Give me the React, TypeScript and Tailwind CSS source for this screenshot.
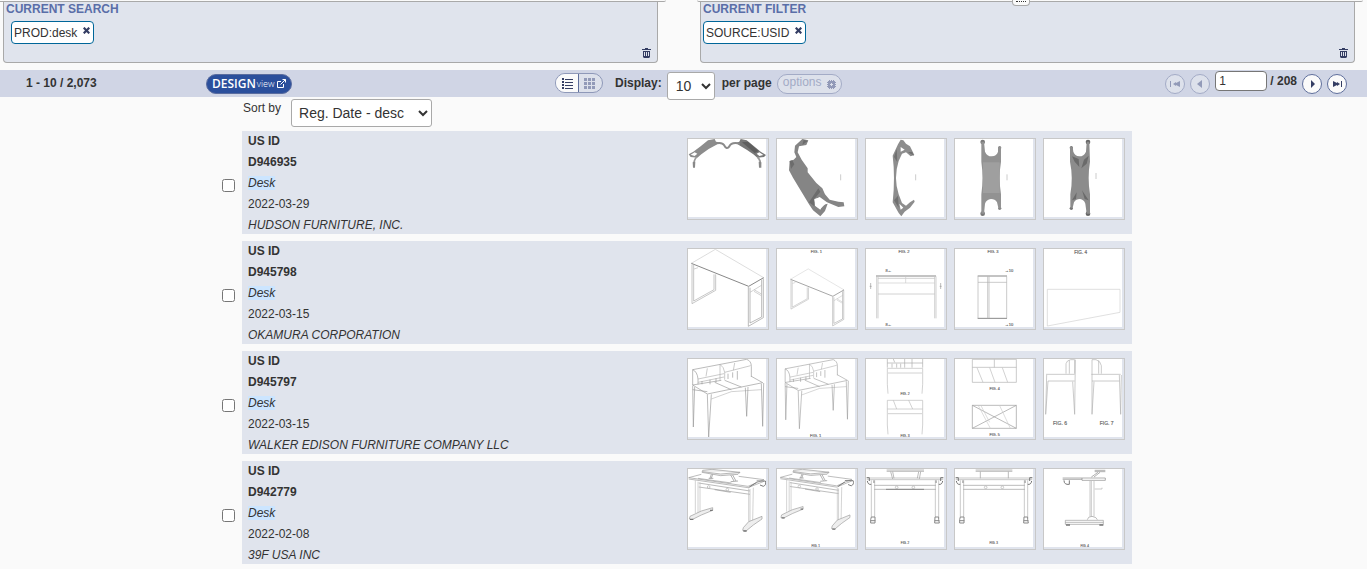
import { useState } from 'react';
import type { ReactNode } from 'react';

type Design = {
  id: string;
  date: string;
  owner: string;
  figures: ReactNode[];
};

function Caption({ x, y, size = 12, children }: { x: number; y: number; size?: number; children: string }) {
  return (
    <text x={x} y={y} fontSize={size} fill="#555" stroke="#777" strokeWidth=".5" textAnchor="middle" fontFamily="Liberation Sans, sans-serif">
      {children}
    </text>
  );
}

// D946935 - bull hide table
const hudson = [
  <g key="a" stroke="none">
    <path d="M2 46 L16 38 L38 22 L60 4 L80 0 L84 8 L94 10 L84 18 L62 30 L40 46 L28 56 L8 54 Z M8 47 L20 51 L28 44 L20 40 Z" fill="#8c8c8c" fillRule="evenodd" />
    <path d="M234 48 L218 38 L198 22 L176 4 L158 0 L154 8 L144 12 L156 20 L176 32 L196 46 L208 56 L228 54 Z M226 48 L214 51 L206 44 L214 40 Z" fill="#777" fillRule="evenodd" />
    <path d="M162 10 L180 8 L212 36 L200 42 Z" fill="#5e5e5e" />
    <path d="M80 14 Q102 8 108 18 Q116 34 124 22 Q130 8 156 14" fill="none" stroke="#8a8a8a" strokeWidth="6" />
    <path d="M26 54 Q16 64 18 82 M208 54 Q220 64 216 82" fill="none" stroke="#999" strokeWidth="5" />
    <path d="M14 70 L22 68 L21 86 L15 86 Z M212 68 L220 70 L220 86 L213 86 Z" fill="#888" />
  </g>,
  <g key="b" stroke="none">
    <path d="M94 4 L76 0 L54 20 L52 40 L58 54 L50 62 L38 66 L36 94 L48 116 L96 196 L108 214 L130 232 L144 216 L152 194 L136 198 L130 212 L114 200 L112 182 L128 174 L150 190 L184 204 L202 202 L200 190 L184 188 L158 182 L144 166 L136 148 L118 132 L92 100 L92 88 L74 62 L62 40 L66 22 L88 18 Z" fill="#858585" />
    <path d="M96 190 L124 148 L130 158 L112 180 L112 202 Z M38 66 L46 64 L52 76 L42 90 Z M80 2 L92 6 L76 18 Z" fill="#6c6c6c" />
    <path d="M112 180 L126 176 L148 192 L130 210 L116 200 Z" fill="#fff" />
    <path d="M191 106 v18" stroke="#ccc" strokeWidth="3" />
  </g>,
  <g key="c" stroke="none">
    <path d="M104 2 L112 4 L120 14 L132 22 L145 48 L134 52 L120 40 L108 44 L98 66 Q82 116 98 166 L108 192 L120 200 L132 190 L144 182 L146 188 L132 206 L116 218 L106 232 L98 222 L80 190 Q88 116 80 50 L96 16 Z M104 24 L104 38 L116 32 Z M100 194 L104 212 L112 206 Z" fill="#8d8d8d" fillRule="evenodd" />
    <path d="M84 54 L92 30 L94 70 Z M84 184 L96 170 L98 206 Z M126 40 L138 38 L144 50 Z" fill="#707070" />
    <path d="M149 106 v18" stroke="#ccc" strokeWidth="3" />
  </g>,
  <g key="d" stroke="none">
    <circle cx="83" cy="9" r="7" fill="#777" />
    <circle cx="83" cy="224" r="7" fill="#777" />
    <circle cx="134" cy="26" r="5" fill="#888" />
    <circle cx="134" cy="208" r="5" fill="#888" />
    <path d="M79 8 h8 L90 38 Q96 52 110 52 Q126 50 129 38 V24 h9 V68 Q130 116 138 166 V206 h-8 L126 190 Q120 180 108 180 Q94 182 90 194 L87 224 H79 V166 Q86 116 79 68 Z" fill="#929292" />
    <path d="M84 70 h50 v92 h-50 z" fill="#9f9f9f" />
    <path d="M156 106 v18" stroke="#ccc" strokeWidth="3" />
  </g>,
  <g key="e" stroke="none">
    <circle cx="132" cy="9" r="7" fill="#666" />
    <circle cx="132" cy="224" r="7" fill="#666" />
    <circle cx="82" cy="26" r="5" fill="#777" />
    <circle cx="82" cy="208" r="5" fill="#777" />
    <path d="M136 8 h-8 L126 38 Q120 52 106 52 Q92 50 88 38 L86 24 H78 V68 Q88 116 79 166 V206 h7 L90 190 Q96 180 108 180 Q120 182 124 194 L128 224 H138 V166 Q130 116 138 68 Z" fill="#8c8c8c" />
    <path d="M84 52 L104 60 L106 84 L92 68 Z M134 50 L128 74 L112 88 L120 62 Z M84 184 L98 160 L96 180 Z M134 184 L114 154 L122 180 Z" fill="#6a6a6a" />
    <path d="M156 102 v18" stroke="#ccc" strokeWidth="3" />
  </g>,
];

function OkamuraPerspective() {
  return (
    <>
      <path d="M10 43 L82 1 L227 86" stroke="#ccc" />
      <path d="M10 43 L182 112 L227 86" stroke="#888" strokeWidth="3" />
      <path d="M12 46 V164 L83 124 V76 M17 48 V156 L78 122 V76" stroke="#aaa" />
      <path d="M181 114 V232 L226 206 V88 M186 116 V222 L221 204 V92" stroke="#999" />
      <path d="M18 60 L30 56 M186 130 L222 108 M198 122 L222 136 M198 127 L220 140" stroke="#bbb" />
    </>
  );
}

const okamura = [
  <OkamuraPerspective key="a" />,
  <g key="b">
    <Caption x={118} y={11}>FIG. 1</Caption>
    <g transform="translate(33 59) scale(.74)">
      <OkamuraPerspective />
    </g>
  </g>,
  <g key="c">
    <Caption x={114} y={11}>FIG. 2</Caption>
    <path d="M30 81 H210" stroke="#888" strokeWidth="3" />
    <path d="M32 82 V208 M36 84 V208 M206 84 V208 M210 82 V208 M36 88 H206 M36 135 H206" stroke="#bbb" />
    <path d="M119 84 V102 M36 102 H206" stroke="#ccc" />
    <path d="M14 102 v18 M11 112 h6 M224 102 v18 M221 112 h6" stroke="#999" />
    <Caption x={68} y={69}>8←</Caption>
    <Caption x={68} y={231}>8←</Caption>
  </g>,
  <g key="d">
    <Caption x={114} y={11}>FIG. 3</Caption>
    <path d="M68 81 H156 M68 208 H156" stroke="#888" strokeWidth="3" />
    <path d="M69 82 V208 M155 82 V208 M98 82 V208 M102 82 V208 M69 100 H155" />
    <Caption x={162} y={69}>→10</Caption>
    <Caption x={162} y={231}>→10</Caption>
  </g>,
  <g key="e">
    <Caption x={110} y={14} size={14}>FIG. 4</Caption>
    <path d="M10 121 H228 V190 L10 231 Z" stroke="#d0d0d0" />
  </g>,
];

function WalkerPerspective() {
  return (
    <>
      <path d="M14 32 L176 1 Q190 6 190 22 V54 M14 32 Q28 38 30 60 V76 M14 32 V78" stroke="#999" />
      <path d="M96 16 V64 M96 16 Q108 24 110 40 V62 M30 60 L108 44 M110 40 L188 20 M30 70 L108 54 M58 28 L54 52 M140 12 L136 34" />
      <path d="M42 66 V76 M66 62 V76 M84 58 V70 M120 44 V60 M134 40 V56 M148 36 V62" stroke="#999" />
      <path d="M14 78 L58 105 L224 71 L190 52 M14 78 L100 64 M80 70 L130 92 M110 64 L160 84 M14 92 L58 98" stroke="#999" />
      <path d="M70 120 L130 98 L220 92" stroke="#bbb" />
      <path d="M14 80 L16 204 L20 84 M58 106 L62 234 L70 106 M172 86 L176 172 L180 84 M220 74 L224 202 L227 72" stroke="#999" />
    </>
  );
}

function WalkerFront() {
  return <path d="M64 28 H170 M66 42 H168 M64 28 V76 L66 104 M170 28 V76 L168 104" />;
}

const walker = [
  <WalkerPerspective key="a" />,
  <g key="b">
    <g transform="translate(12 1) scale(.89)">
      <WalkerPerspective />
    </g>
    <Caption x={116} y={233}>FIG. 1</Caption>
  </g>,
  <g key="c" stroke="#bbb">
    <path d="M64 0 V26 M170 0 V26 M64 12 H170 M116 0 V26 M82 0 L86 10 M138 0 V26 M78 14 V26 M92 14 V26 M104 14 V26" stroke="#aaa" />
    <WalkerFront />
    <Caption x={117} y={107} size={10}>FIG. 2</Caption>
    <path d="M64 124 H170 V150 M64 124 V150 M82 124 L92 150 M128 124 L140 150" />
    <g transform="translate(0 122)">
      <WalkerFront />
    </g>
    <Caption x={117} y={233} size={10}>FIG. 3</Caption>
  </g>,
  <g key="d">
    <path d="M52 1 H184 V70 H52 Z M52 25 H184 M118 1 V25" />
    <path d="M66 26 L84 70 M104 26 L120 70 M142 26 L158 70" stroke="#bbb" />
    <Caption x={119} y={93} size={11}>FIG. 4</Caption>
    <path d="M52 139 H184 V208 H52 Z M52 139 L184 208 M184 139 L52 208" stroke="#999" />
    <path d="M70 140 L106 208 M78 140 L104 190 M134 140 L166 208" stroke="#ccc" />
    <Caption x={119} y={232} size={11}>FIG. 5</Caption>
  </g>,
  <g key="e">
    <path d="M6 46 H92 M12 66 H92 M66 44 V14 Q68 4 80 2 H92 V44 M76 4 V44 M8 48 L5 166 L12 66 M86 68 L92 166 L94 2" />
    <path d="M142 46 H230 M144 66 H226 M144 2 H156 Q170 6 172 20 V44 M164 4 V44 M144 2 V166 L150 68 M226 48 L230 166 L232 48" />
    <Caption x={48} y={199} size={15}>FIG. 6</Caption>
    <Caption x={188} y={199} size={15}>FIG. 7</Caption>
  </g>,
];

function StandingPerspective() {
  return (
    <>
      <path d="M44 4 L72 1 L156 10 L150 16 L98 20 L42 10 Z M44 8 L98 15 L156 10" fill="#eee" stroke="#999" />
      <path d="M70 16 L66 28 M74 16 L70 28 M128 18 L138 36 M134 18 L144 36 M62 28 H76 M128 38 L150 36" stroke="#888" />
      <path d="M2 26 L40 16 M2 26 L180 52 L228 32 L152 22 M2 30 L180 56 L228 37 M30 28 L130 42" stroke="#999" />
      <path d="M206 36 L232 36 Q236 48 226 52 L216 48 M184 54 L206 40" stroke="#777" strokeWidth="3" />
      <path d="M32 42 L186 66 M32 54 L186 76 M80 62 L128 70" stroke="#999" />
      <circle cx="62" cy="54" r="4" />
      <circle cx="118" cy="62" r="4" />
      <path d="M22 34 V132 M30 38 V134 M36 40 V130 M182 58 V158 M186 60 V160 M196 56 L194 156" stroke="#bbb" />
      <path d="M6 142 L40 126 L74 116 V124 L40 138 L12 152 L4 150 Z" fill="#eee" stroke="#999" />
      <path d="M166 176 L182 158 L222 142 V150 L196 168 L174 186 L164 184 Z" fill="#eee" stroke="#999" />
      <path d="M6 151 H16 M166 186 H176 M66 124 H74" stroke="#777" strokeWidth="4" />
    </>
  );
}

function StandingFront({ shelf }: { shelf: string }) {
  return (
    <>
      <path d={shelf} stroke="#999" />
      <path d="M2 27 H232 M2 32 H232" stroke="#aaa" />
      <path d="M4 36 Q6 48 16 46 M2 26 H10 V36 M24 34 V42 M230 36 Q228 48 218 46 M232 26 H224 V36 M210 34 V42" stroke="#777" strokeWidth="3" />
      <path d="M24 49 H210 M24 61 H210" stroke="#999" />
      <path d="M16 34 V144 M26 34 V144 M208 34 V144 M218 34 V144" />
      <path d="M16 144 H27 V162 H14 V152 Z M207 144 H218 V152 L220 162 H206 Z M14 155 H28 M206 155 H220" stroke="#888" strokeWidth="3" />
      <circle cx="92" cy="55" r="4" />
      <circle cx="142" cy="55" r="4" />
    </>
  );
}

const standing = [
  <StandingPerspective key="a" />,
  <g key="b">
    <g transform="translate(8 0) scale(.95 .97)">
      <StandingPerspective />
    </g>
    <Caption x={116} y={233} size={9}>FIG. 1</Caption>
  </g>,
  <g key="c">
    <StandingFront shelf="M62 3 H174 M62 7 H174 M74 8 L80 30 M80 8 L84 28 M158 8 L154 28 M164 8 L160 30" />
    <path d="M60 61 H174" stroke="#666" />
    <Caption x={117} y={226} size={9}>FIG. 2</Caption>
  </g>,
  <g key="d">
    <StandingFront shelf="M62 3 H172 M62 7 H172 M76 8 V28 M160 8 V28" />
    <Caption x={116} y={226} size={9}>FIG. 3</Caption>
  </g>,
  <g key="e">
    <path d="M56 27 H184 M56 31 H114 M114 27 V34 H184 V27 M152 8 H184 M152 4 H184 M168 10 L150 24 M162 10 L142 24" stroke="#888" />
    <path d="M60 34 Q60 48 76 46 V34" stroke="#777" strokeWidth="3" />
    <path d="M138 36 V142 M142 36 V142 M150 36 V142 M152 60 H174 V56" />
    <path d="M130 152 Q132 142 144 142 Q158 144 160 152 M64 154 H178 V166 H64 Z M64 160 H178" stroke="#999" />
    <path d="M66 168 H78 M166 168 H178" stroke="#777" strokeWidth="4" />
    <Caption x={122} y={233} size={9}>FIG. 4</Caption>
  </g>,
];

const designs: Design[] = [
  { id: 'D946935', date: '2022-03-29', owner: 'HUDSON FURNITURE, INC.', figures: hudson },
  { id: 'D945798', date: '2022-03-15', owner: 'OKAMURA CORPORATION', figures: okamura },
  { id: 'D945797', date: '2022-03-15', owner: 'WALKER EDISON FURNITURE COMPANY LLC', figures: walker },
  { id: 'D942779', date: '2022-02-08', owner: '39F USA INC', figures: standing },
];

function Trash() {
  return (
    <svg width="9" height="10" viewBox="0 0 9 10" fill="#343d63" className="block">
      <path fillRule="evenodd" d="M3 0h3v1h3v1H0V1h3z M1 3h7v6l-1 1H2L1 9z M2 4v4h1V4z M4 4v4h1V4z M6 4v4h1V4z" />
    </svg>
  );
}

function QueryPanel({ title, term, inset }: { title: string; term: string; inset?: boolean }) {
  return (
    <section className="flex-1 flex flex-col rounded-b border border-t-0 border-[#a9a9a9] bg-[#e0e4ed] pl-[2px] pb-1">
      <h2 className="font-bold leading-[14px] text-[#5a6ea8]">{title}</h2>
      <div className={inset ? 'flex pl-[5px]' : 'flex'}>
        <div className="mt-[5px] flex h-[23px] items-center rounded-sm rounded-r-[4px] border border-[#006699] bg-white px-[2px]">
          <span>{term}</span>
          <button aria-label={`Remove ${term}`} className="ml-[6px] mb-[5px] mr-px">
            <svg width="7" height="7" viewBox="0 0 7 7" stroke="#343d63" strokeWidth="2.2" className="block">
              <path d="M.7 .7l5.6 5.6M6.3 .7L.7 6.3" />
            </svg>
          </button>
        </div>
      </div>
      <button aria-label={`Clear ${title.toLowerCase()}`} className="mt-1 mr-[6px] self-end">
        <Trash />
      </button>
    </section>
  );
}

function PagerButton({ label, path, disabled }: { label: string; path: string; disabled?: boolean }) {
  return (
    <button
      aria-label={label}
      disabled={disabled}
      className={`mt-1 flex size-5 items-center justify-center rounded-full border ${
        disabled ? 'border-[#a3abc6] bg-[#dde1eb] text-[#929ab8]' : 'border-[#5f6f9c] bg-[#fafafa] text-[#343d63]'
      }`}
    >
      <svg width="10" height="8" viewBox="0 0 10 8" fill="currentColor">
        <path d={path} />
      </svg>
    </button>
  );
}

function Toolbar() {
  const [page, setPage] = useState('1');

  return (
    <div className="mt-[7px] flex h-[27px] items-start bg-[#d0d5e5] font-bold">
      <div className="flex w-[555px] items-start pl-[26px]">
        <span className="w-[180px] leading-[27px]">1 - 10 / 2,073</span>
        <a
          href="#designview"
          className="mt-1 flex h-5 w-[86px] items-center rounded-full border border-[#5a6c9f] bg-[#2b4f9c] pl-[5px] font-['Open_Sans',sans-serif] text-white"
        >
          <span className="text-xs font-semibold">DESIGN</span>
          <span className="ml-px text-[9px] font-light">view</span>
          <svg width="9" height="9" viewBox="0 0 9 9" fill="none" stroke="#fff" className="ml-[3px] mb-[2px]">
            <path d="M4 2.5H.5v6h6V5M3.5 5.5l5-5M5.5 .5h3v3" />
          </svg>
        </a>
      </div>

      <div className="mt-[3px] flex h-5 w-12 overflow-hidden rounded-full border border-[#8e98b8] bg-[#dde1eb]">
        <button aria-label="List view" className="flex w-[23px] items-center justify-center border-r border-[#5f6f9c] bg-[#fafafa]">
          <svg width="11" height="11" viewBox="0 0 11 11" fill="#343d63">
            <path d="M0 0h2v2H0zM3 1h8v1H3zM0 3h2v2H0zM3 4h8v1H3zM0 6h2v2H0zM3 7h8v1H3zM0 9h2v2H0zM3 10h8v1H3z" />
          </svg>
        </button>
        <button aria-label="Grid view" className="flex flex-1 items-center pl-[5px]">
          <svg width="11" height="11" viewBox="0 0 11 11" fill="#929ab8">
            <path d="M0 0h3v3H0zM4 0h3v3H4zM8 0h3v3H8zM0 4h3v3H0zM4 4h3v3H4zM8 4h3v3H8zM0 8h3v3H0zM4 8h3v3H4zM8 8h3v3H8z" />
          </svg>
        </button>
      </div>
      <label htmlFor="per-page" className="ml-3 leading-[26px]">Display:</label>
      <select
        id="per-page"
        className="ml-[5px] mt-[2px] h-7 w-12 rounded-[3px] border border-[#a9a9a9] bg-white pl-1 text-sm font-normal"
      >
        <option>10</option>
        <option>20</option>
        <option>50</option>
      </select>
      <span className="ml-[7px] leading-[26px]">per page</span>
      <button
        disabled
        className="ml-[5px] mt-1 flex h-5 w-[65px] items-center justify-center rounded-full border border-[#a3abc6] bg-[#dde1eb] font-normal text-[#a3abc6]"
      >
        <span className="mb-1">options</span>
        <svg width="9" height="9" viewBox="0 0 9 9" fill="#929ab8" className="ml-[5px]">
          <path fillRule="evenodd" d="M2 0h1v1h1V0h1v1h1V0h1v1h1v1h1v1H8v1h1v1H8v1h1v1H8v1H7v1H6V8H5v1H4V8H3v1H2V8H1V7H0V6h1V5H0V4h1V3H0V2h1V1h1z M3 4v1h1v1h1V5h1V4H5V3H4v1z" />
        </svg>
      </button>

      <div className="ml-auto flex items-start gap-[5px] pr-5">
        <PagerButton disabled label="First page" path="M0 1h1v6H0zM3 4l3-2v1l4-2v6l-4-2v1z" />
        <PagerButton disabled label="Previous page" path="M2 4l5-4v8z" />
        <input
          aria-label="Page"
          value={page}
          onChange={(e) => setPage(e.target.value)}
          className="mt-px h-5 w-[52px] rounded-sm border border-[#767676] bg-white px-[3px] font-normal"
        />
        <span className="-ml-[2px] leading-[22px]">/ 208</span>
        <PagerButton label="Next page" path="M4 0l4 4-4 4z" />
        <PagerButton label="Last page" path="M1 1l4 2V2l3 2-3 2V5L1 7zM9 1h1v6H9z" />
      </div>
    </div>
  );
}

function DesignRow({ design }: { design: Design }) {
  return (
    <li className="flex items-center">
      <input type="checkbox" aria-label={`Select ${design.id}`} className="mt-[5px] mr-[7px] size-[13px]" />
      <article className="flex flex-1 items-start justify-between bg-[#e0e4ed] pl-[6px] pr-[7px]">
        <div className="flex flex-col gap-1 pt-[2px] leading-[17px]">
          <b>US ID</b>
          <b>{design.id}</b>
          <i>
            <mark className="bg-[#cce5ff] text-inherit">Desk</mark>
          </i>
          <span>{design.date}</span>
          <i>{design.owner}</i>
        </div>
        <div className="flex gap-[7px] pt-[7px]">
          {design.figures.map((figure, i) => (
            <a key={i} href={`#${design.id}-${i + 1}`} aria-label={`${design.id} figure ${i + 1}`} className="block border border-[#c8c8c8] pr-[2px] pb-[2px]">
              <svg width="78" height="78" viewBox="0 0 234 234" fill="none" stroke="#b0b0b0" strokeWidth="2" className="block bg-white">
                {figure}
              </svg>
            </a>
          ))}
        </div>
      </article>
    </li>
  );
}

export default function App() {
  return (
    <div className="min-h-screen bg-[#fafafa] font-['Liberation_Sans',Arial,sans-serif] text-xs text-[#333]">
      {/* lower edge of the search form boxes */}
      <div className="relative flex gap-[31px] pr-1">
        <div className="h-[2px] flex-1 rounded-br border-b border-[#a9a9a9]" />
        <div className="h-[2px] flex-1 rounded-b border-b border-[#a9a9a9]" />
        <div className="absolute left-[74%] top-0 h-[6px] w-[18px] rounded-b-sm border border-t-0 border-[#a9a9a9] bg-[#fafafa] pt-px">
          <div className="mx-[3px] border-t border-dotted border-[#333]" />
        </div>
      </div>

      <div className="flex gap-[42px] pl-[3px] pr-3">
        <QueryPanel title="CURRENT SEARCH" term="PROD:desk" inset />
        <QueryPanel title="CURRENT FILTER" term="SOURCE:USID" />
      </div>

      <Toolbar />

      <main className="pl-[222px] pr-[235px]">
        <div className="flex items-start pl-[21px] pt-[2px]">
          <label htmlFor="sort" className="leading-[18px]">Sort by</label>
          <select id="sort" className="ml-[10px] h-7 w-[141px] rounded-[3px] border border-[#a9a9a9] bg-white pl-[3px] text-sm">
            <option>Reg. Date - desc</option>
            <option>Reg. Date - asc</option>
          </select>
        </div>
        <ul className="mt-1 flex flex-col gap-[7px]">
          {designs.map((design) => (
            <DesignRow key={design.id} design={design} />
          ))}
        </ul>
      </main>
    </div>
  );
}
